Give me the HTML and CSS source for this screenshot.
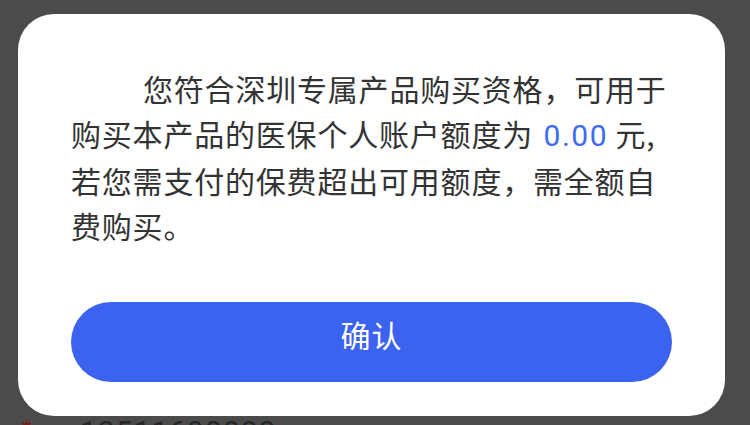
FILE: index.html
```html
<!DOCTYPE html>
<html lang="zh-CN">
<head>
    <meta charset="UTF-8">
    <meta name="viewport" content="width=device-width, initial-scale=1.0">
    <title>医保个人账户</title>
    <link rel="stylesheet" href="styles.css">
</head>
<body>
    <!-- 资格提示弹窗 -->
    <div class="dialog">
        <p class="dialog-text">您符合深圳专属产品购买资格，可用于购买本产品的医保个人账户额度为 <span class="amount">0.00</span> 元,若您需支付的保费超出可用额度，需全额自费购买。</p>
        <button class="btn">确认</button>
    </div>

    <!-- 遮罩下的表单 -->
    <div class="form-row">
        <span class="required">*</span>
        <span class="phone">13511698888</span>
    </div>
</body>
</html>
```

FILE: styles.css
```css
body {
    margin: 0;
    background-color: #4b4b4b;
    font-family: "Noto Sans CJK SC", "Noto Sans", sans-serif;
    overflow: hidden;
}
.dialog {
    margin: 14px 25px 0 18px;
    padding: 52px 53px 34px 53px;
    background: #fff;
    border-radius: 36px;
}
.dialog-text {
    margin: 0 0 54px 0;
    font-size: 30px;
    line-height: 45px;
    letter-spacing: 0.8px;
    text-indent: 72px;
    color: #333;
}
.amount {
    color: #3d6cf2;
    font-family: Roboto, "Noto Sans", sans-serif;
    letter-spacing: 1.5px;
    padding-left: 3px;
}
.btn {
    display: block;
    width: 100%;
    height: 80px;
    padding: 0 0 16px 0;
    border: none;
    border-radius: 40px;
    background: #3c62f0;
    color: #fff;
    font-family: "Noto Sans CJK SC", sans-serif;
    font-size: 30px;
    letter-spacing: 1px;
}
.form-row {
    display: flex;
    align-items: baseline;
    padding-left: 20px;
    margin-top: -4px;
    font-size: 30px;
    line-height: 36px;
}
.required {
    width: 60px;
    color: #7a1c1c;
    font-size: 28px;
}
.phone {
    color: #262626;
    font-family: Roboto, sans-serif;
    letter-spacing: 1px;
}
```
